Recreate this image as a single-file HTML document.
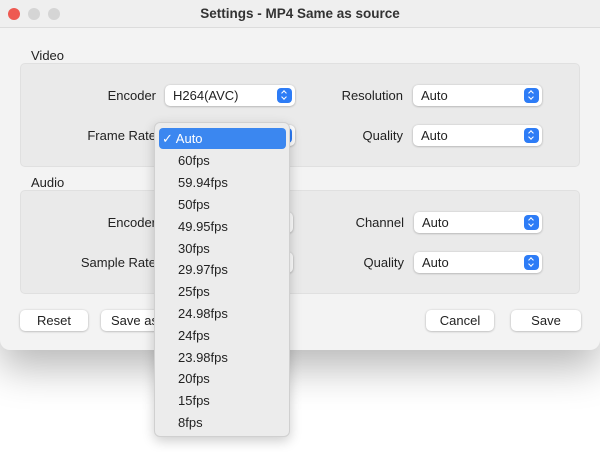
<!DOCTYPE html>
<html><head><style>
*{box-sizing:border-box;margin:0;padding:0}
body{width:600px;height:452px;background:#fff;font-family:"Liberation Sans",sans-serif;font-size:13px;color:#222;position:relative;overflow:hidden}
.win{position:absolute;left:0;top:0;width:600px;height:350px;background:#f3f3f3;border-radius:0 0 10px 10px;box-shadow:0 18px 40px rgba(0,0,0,.28)}
.title{position:absolute;left:0;top:0;width:600px;height:28px;background:#efefef;border-bottom:1px solid #dcdcdc;text-align:center;line-height:27px;font-weight:bold;font-size:13.5px;color:#333}
.dot{position:absolute;top:8px;width:12px;height:12px;border-radius:50%;background:#d5d5d5}
.grp{position:absolute;left:20px;width:560px;background:#eaeaea;border:1px solid #e0e0e0;border-radius:5px}
.lbl{position:absolute;font-size:13px}
.r{text-align:right}
.pop{position:absolute;height:21px;background:#fff;border-radius:5px;box-shadow:0 0.5px 2px rgba(0,0,0,.3);padding-left:8px;line-height:21px}
.pop i{position:absolute;right:3px;top:3px;width:15px;height:15px;background:#2d7cf6;border-radius:4px}
.pop i:before{content:"";position:absolute;left:5px;top:3px;width:3px;height:3px;border-left:1.5px solid #fff;border-top:1.5px solid #fff;transform:rotate(45deg)}
.pop i:after{content:"";position:absolute;left:5px;top:7px;width:3px;height:3px;border-right:1.5px solid #fff;border-bottom:1.5px solid #fff;transform:rotate(45deg)}
.btn{position:absolute;top:310px;height:21px;background:#fff;border-radius:5px;box-shadow:0 0.5px 2px rgba(0,0,0,.3);text-align:center;line-height:21px}
.menu{position:absolute;left:154px;top:122px;width:136px;height:315px;background:#ececec;border:1px solid #d0d0d0;border-radius:6px;box-shadow:0 4px 12px rgba(0,0,0,.2)}
.it{position:absolute;left:23px;font-size:13px;color:#222;height:22px;line-height:22px}
.hl{position:absolute;left:4px;top:5px;width:127px;height:21px;background:#3b87f0;border-radius:4px;color:#fff;line-height:21px;padding-left:3px;font-size:13px}
</style></head><body>
<div class="win">
<div class="title">Settings - MP4 Same as source</div>
<div class="dot" style="left:8px;background:#ee5a52"></div>
<div class="dot" style="left:28px"></div>
<div class="dot" style="left:48px"></div>
<div class="lbl" style="left:31px;top:48px">Video</div>
<div class="grp" style="top:63px;height:104px"></div>
<div class="lbl r" style="left:60px;width:96px;top:88px">Encoder</div>
<div class="pop" style="left:165px;top:85px;width:130px">H264(AVC)<i></i></div>
<div class="lbl r" style="left:40px;width:116px;top:128px">Frame Rate</div>
<div class="pop" style="left:165px;top:125px;width:130px"><i></i></div>
<div class="lbl r" style="left:300px;width:103px;top:88px">Resolution</div>
<div class="pop" style="left:413px;top:85px;width:129px">Auto<i></i></div>
<div class="lbl r" style="left:300px;width:103px;top:128px">Quality</div>
<div class="pop" style="left:413px;top:125px;width:129px">Auto<i></i></div>
<div class="lbl" style="left:31px;top:175px">Audio</div>
<div class="grp" style="top:190px;height:104px"></div>
<div class="lbl r" style="left:60px;width:96px;top:215px">Encoder</div>
<div class="pop" style="left:165px;top:212px;width:128px"><i></i></div>
<div class="lbl r" style="left:40px;width:116px;top:255px">Sample Rate</div>
<div class="pop" style="left:165px;top:252px;width:128px"><i></i></div>
<div class="lbl r" style="left:300px;width:104px;top:215px">Channel</div>
<div class="pop" style="left:414px;top:212px;width:128px">Auto<i></i></div>
<div class="lbl r" style="left:300px;width:104px;top:255px">Quality</div>
<div class="pop" style="left:414px;top:252px;width:128px">Auto<i></i></div>
<div class="btn" style="left:20px;width:68px">Reset</div>
<div class="btn" style="left:101px;width:70px;text-align:left;padding-left:10px">Save as</div>
<div class="btn" style="left:426px;width:68px">Cancel</div>
<div class="btn" style="left:511px;width:70px">Save</div>
</div>
<div class="menu">
<div class="hl">✓ Auto</div>
<div class="it" style="top:27px">60fps</div>
<div class="it" style="top:49px">59.94fps</div>
<div class="it" style="top:71px">50fps</div>
<div class="it" style="top:93px">49.95fps</div>
<div class="it" style="top:115px">30fps</div>
<div class="it" style="top:136px">29.97fps</div>
<div class="it" style="top:158px">25fps</div>
<div class="it" style="top:180px">24.98fps</div>
<div class="it" style="top:202px">24fps</div>
<div class="it" style="top:224px">23.98fps</div>
<div class="it" style="top:245px">20fps</div>
<div class="it" style="top:267px">15fps</div>
<div class="it" style="top:289px">8fps</div>
</div>
</body></html>
